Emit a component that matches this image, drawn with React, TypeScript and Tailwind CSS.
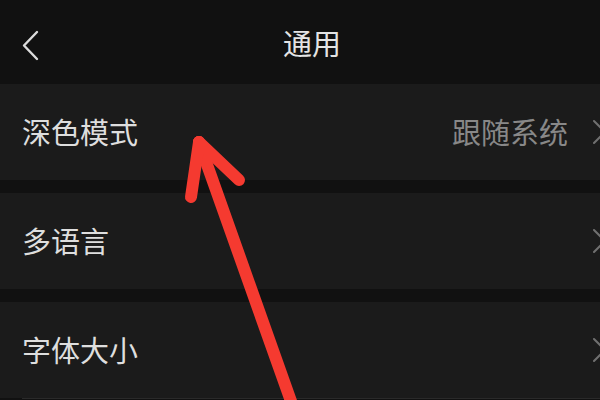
function Chevron() {
  return (
    <svg className="shrink-0" width="16" height="26" viewBox="0 0 16 26">
      <path d="M2 2 L13 13 L2 24" fill="none" stroke="#707070" strokeWidth="2" strokeLinecap="round" strokeLinejoin="round" />
    </svg>
  )
}

function Row({ label, value }: { label: string; value?: string }) {
  return (
    <div className="flex items-center justify-between h-[96px] bg-[#1b1b1b] pl-[22px]">
      <span className="text-[29px] text-[#dedede] leading-none -translate-y-px">{label}</span>
      <div className="flex items-center gap-[24px] mr-[-8px]">
        {value && <span className="text-[29px] text-[#888888] leading-none -translate-y-px">{value}</span>}
        <Chevron />
      </div>
    </div>
  )
}

export default function App() {
  return (
    <div
      className="relative w-[600px] h-[400px] overflow-hidden bg-[#111111]"
      style={{ fontFamily: '"Noto Sans CJK SC", "Noto Sans", sans-serif' }}
    >
      <header className="relative flex items-center justify-center h-[84px] bg-[#111111]">
        <svg className="absolute left-[20px] top-[30px]" width="22" height="32" viewBox="0 0 22 32">
          <path d="M17 2 L4 15.5 L17 29" fill="none" stroke="#dcdcdc" strokeWidth="2.4" strokeLinecap="round" strokeLinejoin="round" />
        </svg>
        <span className="text-[29px] text-[#e4e4e4] leading-none translate-x-[12px]">通用</span>
      </header>

      <div className="flex flex-col">
        <Row label="深色模式" value="跟随系统" />
        <div className="h-[13px] bg-[#111111]" />
        <Row label="多语言" />
        <div className="h-[13px] bg-[#111111]" />
        <Row label="字体大小" />
        <div className="ml-[22px] h-px bg-[#2a2a2a]" />
      </div>

      <svg className="absolute inset-0 pointer-events-none" width="600" height="400" viewBox="0 0 600 400">
        <g stroke="#f53a30" strokeWidth="12" strokeLinecap="round" fill="none">
          <path d="M292 404 L199 142" />
          <path d="M199 142 L191 197" />
          <path d="M199 142 L239 180" />
        </g>
      </svg>
    </div>
  )
}
